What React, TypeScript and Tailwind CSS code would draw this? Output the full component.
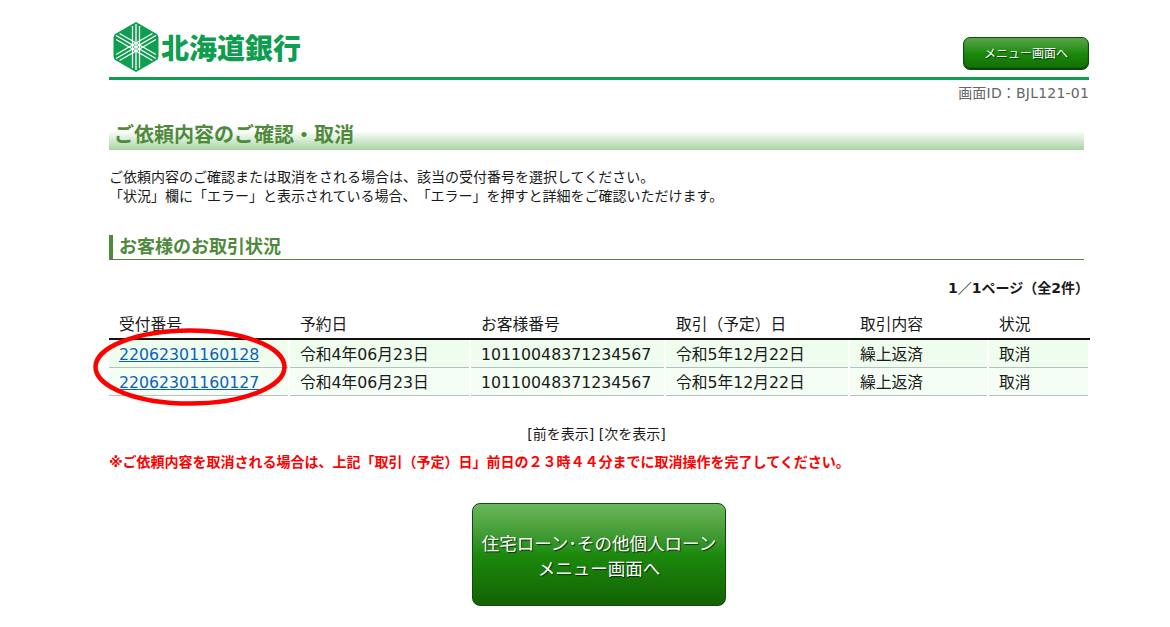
const font = { fontFamily: '"DejaVu Sans","Noto Sans CJK JP",sans-serif' };

function Logo() {
  const arm = [0, 60, 120];
  return (
    <svg width="48" height="52" viewBox="0 0 48 52" className="block">
      <path d="M24 1 L44 12.5 Q46.500 14 46.500 16.500 L46.500 35.500 Q46.500 38 44 39.500 L24 51 L4 39.500 Q1.500 38 1.500 35.500 L1.500 16.500 Q1.500 14 4 12.500 Z" fill="#0f9d4f" />
      {arm.map((a) => (
        <g key={a} transform={`rotate(${a} 24 26)`} stroke="#fff" strokeWidth="1.3">
          <line x1="24" y1="3" x2="24" y2="49" />
          <line x1="20.500" y1="5" x2="20.500" y2="47" />
          <line x1="27.500" y1="5" x2="27.500" y2="47" />
        </g>
      ))}
    </svg>
  );
}

const rows = [
  ["22062301160128", "令和4年06月23日", "10110048371234567", "令和5年12月22日", "繰上返済", "取消"],
  ["22062301160127", "令和4年06月23日", "10110048371234567", "令和5年12月22日", "繰上返済", "取消"],
];
const heads = ["受付番号", "予約日", "お客様番号", "取引（予定）日", "取引内容", "状況"];
const widths = ["w-[180px]", "w-[181px]", "w-[195px]", "w-[184px]", "w-[139px]", "w-[101px]"];

export default function App() {
  return (
    <div style={font} className="relative ml-[109px] w-[980px] text-[14px] text-[#1a1a1a] bg-white [text-spacing-trim:space-all]">
      <header className="h-[80px] border-b-[3px] border-[#0f9d4f] flex items-end justify-between pb-[7px]">
        <div className="flex items-center mb-[-4px] pl-[3px] pb-[1px]">
          <Logo />
          <span className="ml-[1px] text-[28px] leading-[34px] font-black text-[#0f9d4f]" style={{ fontFamily: '"Noto Sans CJK JP",sans-serif' }}>北海道銀行</span>
        </div>
        <button className="w-[126px] h-[33px] rounded-[7px] border border-[#0b4d0b] bg-gradient-to-b from-[#55a645] via-[#1a8a0a] to-[#136c06] text-white text-[12px] [text-shadow:1px_1px_1px_#0a3a0a] shadow-[inset_0_-1px_1px_#0a3a0a]">
          メニュー画面へ
        </button>
      </header>
      <div className="text-right text-[14px] leading-[20px] tracking-[0.2px] text-[#666] mt-[3px]">画面ID：BJL121-01</div>
      <h1 className="mt-[19px] w-[975px] h-[28px] pl-[5px] text-[20px] leading-[26px] font-bold text-[#4f8a3c] bg-gradient-to-b from-white from-[30%] to-[#a8d5a2]">
        ご依頼内容のご確認・取消
      </h1>
      <p className="mt-[18px] leading-[19px] text-[14px]">
        ご依頼内容のご確認または取消をされる場合は、該当の受付番号を選択してください。<br />
        「状況」欄に「エラー」と表示されている場合、「エラー」を押すと詳細をご確認いただけます。
      </p>
      <h2 className="mt-[29px] w-[975px] h-[25px] border-l-[4px] border-b border-[#4f8a3c] pl-[6px] text-[18px] leading-[24px] font-bold text-[#4f8a3c]">
        お客様のお取引状況
      </h2>
      <div className="mt-[18px] pr-0 text-right text-[14px] leading-[20px] font-bold">1／1ページ（全2件）</div>

      <table className="mt-[14px] w-[980px] table-fixed border-collapse text-[15.75px]">
        <thead>
          <tr>
            {heads.map((h, i) => (
              <th key={h} className={`${widths[i]} h-[27px] pl-[10px] text-left font-normal border-b-2 border-b-[#111] border-r-2 border-r-white leading-[20px]`}>{h}</th>
            ))}
          </tr>
        </thead>
        <tbody>
          {rows.map((r, ri) => (
            <tr key={r[0]} className={ri === 0 ? "bg-[#eefdee]" : "bg-[#f5fef5]"}>
              {r.map((c, i) => (
                <td key={i} className="h-[28px] pl-[10px] pt-[3px] border-b border-b-[#b4c0c4] border-r-2 border-r-white leading-[20px]">
                  {i === 0 ? <a className="text-[#0f5fb8] underline" href="#">{c}</a> : c}
                </td>
              ))}
            </tr>
          ))}
        </tbody>
      </table>

      <div className="mt-[28px] pr-[5px] text-center text-[14px] leading-[20px]">[前を表示] [次を表示]</div>
      <p className="mt-[8px] text-[14px] leading-[20px] font-bold text-[#f00]">
        ※ご依頼内容を取消される場合は、上記「取引（予定）日」前日の２３時４４分までに取消操作を完了してください。
      </p>
      <div className="mt-[31px] flex justify-center">
        <button className="w-[254px] h-[103px] pt-[6px] rounded-[8px] border border-[#0d4d0d] bg-gradient-to-b from-[#6cb65c] via-[#1c8a0c] to-[#136204] text-white text-[17.5px] leading-[25px] whitespace-nowrap [text-shadow:1px_1px_1px_#083008]">
          住宅ローン･その他個人ローン<br />メニュー画面へ
        </button>
      </div>

      <svg className="absolute left-[-16px] top-[328px] pointer-events-none" width="194" height="78" viewBox="0 0 194 78">
        <ellipse cx="97" cy="39" rx="94.500" ry="36.500" fill="none" stroke="#f00" strokeWidth="4.500" />
      </svg>
    </div>
  );
}
